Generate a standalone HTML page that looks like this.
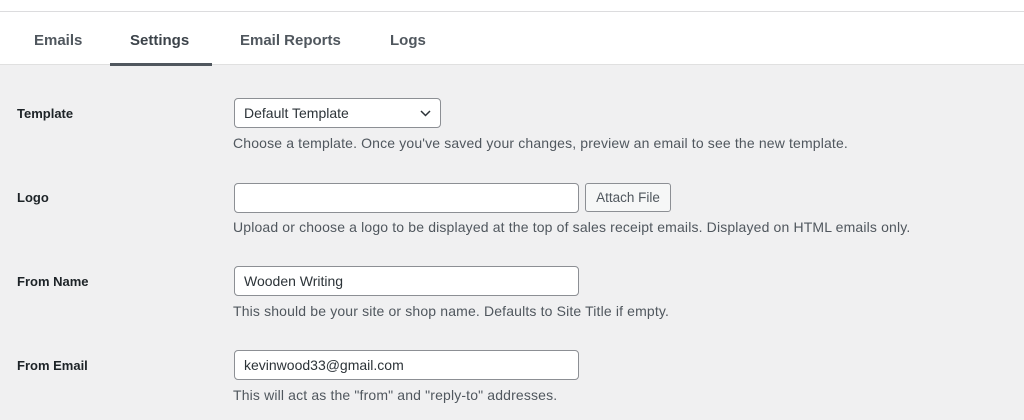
<!DOCTYPE html>
<html><head><meta charset="utf-8"><style>
*{box-sizing:border-box;margin:0;padding:0}
body{width:1024px;height:420px;overflow:hidden;background:#f0f0f1;font-family:"Liberation Sans",sans-serif;position:relative;color:#1d2327}
.top{position:absolute;left:0;top:0;width:1024px;height:12px;background:#fff;border-bottom:1px solid #dcdcde}
.tabs{position:absolute;left:0;top:12px;width:1024px;height:53px;background:#fff;border-bottom:1px solid #e0e0e0}
.tab{position:absolute;top:20px;font-size:15px;font-weight:bold;color:#50575e}
.ul{position:absolute;left:110px;top:63px;width:102px;height:3px;background:#50575e}
.lbl{position:absolute;left:17px;font-size:13px;font-weight:bold;color:#1d2327}
.inp{position:absolute;left:234px;height:30px;background:#fff;border:1px solid #8c8f94;border-radius:4px;font-size:14px;color:#2c3338;padding:6px 9px}
.desc{position:absolute;left:233px;font-size:14px;letter-spacing:0.15px;color:#50575e}
.btn{position:absolute;left:585px;top:183px;width:86px;height:29px;border:1px solid #8c8f94;border-radius:3px;background:#f6f7f7;font-size:13.5px;color:#50575e;text-align:center;line-height:28px}
</style></head><body>
<div class="top"></div>
<div class="tabs">
<span class="tab" style="left:34px">Emails</span>
<span class="tab" style="left:130px;color:#3c434a">Settings</span>
<span class="tab" style="left:240px">Email Reports</span>
<span class="tab" style="left:390px">Logs</span>
</div>
<div class="ul"></div>

<div class="lbl" style="top:106px">Template</div>
<div class="inp" style="top:98px;width:207px">Default Template
<svg style="position:absolute;right:9px;top:11px" width="11" height="7" viewBox="0 0 11 7"><path d="M1 1l4.5 4.5L10 1" stroke="#2c3338" stroke-width="1.5" fill="none"/></svg></div>
<div class="desc" style="top:135px">Choose a template. Once you've saved your changes, preview an email to see the new template.</div>

<div class="lbl" style="top:190px">Logo</div>
<div class="inp" style="top:183px;width:345px"></div>
<div class="btn">Attach File</div>
<div class="desc" style="top:219px">Upload or choose a logo to be displayed at the top of sales receipt emails. Displayed on HTML emails only.</div>

<div class="lbl" style="top:274px">From Name</div>
<div class="inp" style="top:266px;width:345px">Wooden Writing</div>
<div class="desc" style="top:303px">This should be your site or shop name. Defaults to Site Title if empty.</div>

<div class="lbl" style="top:358px">From Email</div>
<div class="inp" style="top:350px;width:345px">kevinwood33@gmail.com</div>
<div class="desc" style="top:387px">This will act as the "from" and "reply-to" addresses.</div>
</body></html>
